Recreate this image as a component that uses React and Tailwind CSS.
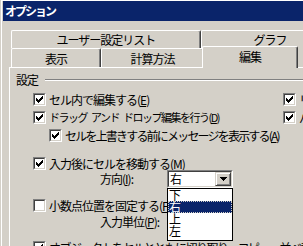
import React from 'react';

// classic sunken checkbox with the 7x7 pixel tick
function CheckBox({ checked }) {
  return (
    <div className="w-[13px] h-[13px] shrink-0 border border-t-[#808080] border-l-[#808080] border-r-white border-b-white">
      <div className="w-full h-full border border-t-[#404040] border-l-[#404040] border-r-[#d4d0c8] border-b-[#d4d0c8] bg-white">
        {checked && (
          <svg width="9" height="9" viewBox="0 0 9 9" shapeRendering="crispEdges" className="block">
            <path
              fill="#000"
              d="M7 1h1v1H7zM6 2h2v1H6zM1 3h1v1H1zM5 3h3v1H5zM1 4h2v1H1zM4 4h3v1H4zM1 5h5v1H1zM2 6h3v1H2zM3 7h1v1H3z"
            />
          </svg>
        )}
      </div>
    </div>
  );
}

function Tab({ children, className = '' }) {
  return (
    <div
      className={`shrink-0 flex items-center justify-center border-t border-l border-r border-t-white border-l-white border-r-[#404040] shadow-[inset_-1px_0_#808080] rounded-t-[2px] ${className}`}
    >
      {children}
    </div>
  );
}

function Option({ checked, children, className = '' }) {
  return (
    <div className={`flex items-center h-[13px] ${className}`}>
      <CheckBox checked={checked} />
      <span className="ml-[3px] whitespace-nowrap leading-[13px]">{children}</span>
    </div>
  );
}

const items = ['下', '右', '上', '左'];

export default function App() {
  return (
    <div className="w-[303px] h-[246px] overflow-hidden bg-[#d4d0c8] pl-[1px] text-[12px] text-black font-['Noto_Sans_CJK_JP','Noto_Sans',sans-serif]">
      <div className="h-full border-l border-t border-white pl-[1px]">
        {/* title bar */}
        <div className="h-[20px] bg-[#0a246a] flex items-center pl-[2px] text-white font-bold tracking-[-2px] leading-none">
          オプション
        </div>

        <div className="ml-[6px] mt-[9px]">
          {/* back row of tabs */}
          <div className="flex h-[18px] pl-[2px] tracking-[-1px]">
            <Tab className="w-[190px]">ユーザー設定リスト</Tab>
            <Tab className="w-[138px]">グラフ</Tab>
          </div>
          {/* front row of tabs */}
          <div className="flex h-[19px] pl-[2px] tracking-[-1px]">
            <Tab className="w-[90px] pt-[1px]">表示</Tab>
            <Tab className="w-[103px] pt-[1px]">計算方法</Tab>
            <Tab className="relative z-10 -ml-[2px] -mt-[2px] w-[96px] h-[22px] bg-[#d4d0c8] pb-[1px]">
              編集
            </Tab>
          </div>

          {/* panel */}
          <div className="h-[200px] border-t border-l border-white pl-[6px] pt-[4px] tracking-[-1px]">
            <div className="flex items-center h-[15px]">
              <span>設定</span>
              <div className="flex-1 ml-[7px] h-[2px] border-t border-t-[#808080] border-b border-b-white" />
            </div>

            <div className="flex mt-[6px]">
              <Option checked className="ml-[17px] w-[250px] shrink-0">
                セル内で編集する(<u>E</u>)
              </Option>
              <Option checked className="shrink-0">
                リストの書式と数式を拡張する(<u>L</u>)
              </Option>
            </div>
            <div className="flex mt-[5px]">
              <Option checked className="ml-[17px] w-[250px] shrink-0 text-[11px] tracking-[-1.5px]">
                {'ドラッグ\u2002アンド\u2002ドロップ編集を行う('}
                <u>D</u>)
              </Option>
              <Option checked className="shrink-0">
                パーセント自動入力を有効にする(<u>P</u>)
              </Option>
            </div>
            <Option checked className="ml-[33px] mt-[5px] tracking-[-1.8px]">
              セルを上書きする前にメッセージを表示する(<u>A</u>)
            </Option>

            <Option checked className="ml-[17px] mt-[15px]">
              入力後にセルを移動する(<u>M</u>)
            </Option>

            {/* direction combo */}
            <div className="flex items-center h-[18px]">
              <span className="ml-[84px] w-[67px] shrink-0">
                方向(<u>I</u>):
              </span>
              <div className="relative w-[66px] h-[18px] shrink-0">
                <div className="h-full border border-t-[#808080] border-l-[#808080] border-r-white border-b-white">
                  <div className="h-full flex border border-t-[#404040] border-l-[#404040] border-r-[#d4d0c8] border-b-[#d4d0c8] bg-white">
                    <span className="flex-1 pl-[1px] leading-[14px]">右</span>
                    <div className="w-[16px] h-full flex items-center justify-center bg-[#d4d0c8] border border-t-[#d4d0c8] border-l-[#d4d0c8] border-r-[#404040] border-b-[#404040] shadow-[inset_1px_1px_#fff,inset_-1px_-1px_#808080]">
                      <svg width="7" height="4" viewBox="0 0 7 4" shapeRendering="crispEdges">
                        <path fill="#000" d="M0 0h7v1H0zM1 1h5v1H1zM2 2h3v1H2zM3 3h1v1H3z" />
                      </svg>
                    </div>
                  </div>
                </div>
                {/* open list */}
                <div className="absolute z-20 left-0 top-[18px] w-[66px] h-[53px] border border-black bg-white">
                  {items.map((it) => (
                    <div
                      key={it}
                      className={`h-[12px] leading-[12px] pl-[1px] ${
                        it === '右'
                          ? 'bg-[#0a246a] text-white outline outline-1 outline-dotted outline-[#d4d0c8] -outline-offset-1'
                          : ''
                      }`}
                    >
                      {it}
                    </div>
                  ))}
                </div>
              </div>
            </div>

            <Option className="ml-[17px] mt-[11px]">
              小数点位置を固定する(<u>F</u>)
            </Option>
            <div className="flex items-center h-[18px] mt-[1px]">
              <span className="ml-[84px] whitespace-nowrap">
                入力単位(<u>P</u>):
              </span>
            </div>
            <Option checked className="ml-[17px] mt-[10px] tracking-[-1.5px]">
              オブジェクトをセルとともに切り取り、コピー、並べ替えする(<u>O</u>)
            </Option>
          </div>
        </div>
      </div>
    </div>
  );
}
